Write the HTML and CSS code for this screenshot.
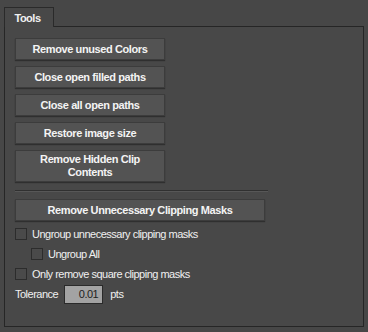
FILE: index.html
```html
<!DOCTYPE html>
<html>
<head>
<meta charset="utf-8">
<link rel="stylesheet" href="styles.css">
</head>
<body>
<div class="tabs"><div class="tab">Tools</div></div>
<div class="panel">
  <button class="btn">Remove unused Colors</button>
  <button class="btn">Close open filled paths</button>
  <button class="btn">Close all open paths</button>
  <button class="btn">Restore image size</button>
  <button class="btn tall">Remove Hidden Clip<br>Contents</button>
  <div class="sep"></div>
  <button class="btn wide">Remove Unnecessary Clipping Masks</button>
  <label class="check"><span class="box"></span>Ungroup unnecessary clipping masks</label>
  <label class="check sub"><span class="box"></span>Ungroup All</label>
  <label class="check"><span class="box"></span>Only remove square clipping masks</label>
  <div class="tol"><span>Tolerance</span><span class="input">0.01</span><span>pts</span></div>
</div>
</body>
</html>
```
FILE: styles.css
```css
html, body { margin: 0; padding: 0; }
body {
  background: #474747;
  width: 368px;
  height: 332px;
  font-family: "Liberation Sans", Arial, sans-serif;
  font-size: 11px;
  letter-spacing: -0.5px;
  color: #f0f0f0;
  overflow: hidden;
}
.tabs {
  padding: 7px 0 0 4px;
  height: 19px;
  display: flex;
  position: relative;
  z-index: 1;
}
.tab {
  width: 50px;
  box-sizing: border-box;
  border: 1px solid #2a2a2a;
  border-bottom: none;
  background: #484848;
  font-weight: bold;
  text-align: center;
  line-height: 21px;
  padding-right: 3px;
  height: 20px;
}
.panel {
  margin-left: 4px;
  width: 360px;
  height: 301px;
  box-sizing: border-box;
  border: 1px solid #262626;
  background: #484848;
  padding: 11px 0 0 10px;
  display: flex;
  flex-direction: column;
  align-items: flex-start;
}
.btn {
  width: 150px;
  height: 22px;
  margin: 0 0 6px 0;
  padding: 0;
  background: #535353;
  border: 1px solid #3c3c3c;
  box-shadow: 0 1px 1px #2f2f2f;
  color: #f4f4f4;
  font-family: "Liberation Sans", Arial, sans-serif;
  font-size: 11px;
  letter-spacing: -0.4px;
  font-weight: bold;
  line-height: 13px;
}
.btn.tall { height: 32px; line-height: 13px; padding-bottom: 1px; }
.btn.wide { width: 250px; margin-bottom: 7px; }
.sep {
  width: 253px;
  height: 0;
  border-top: 1px solid #303030;
  border-bottom: 1px solid #575757;
  margin: 2px 0 7px 0;
}
.check {
  display: flex;
  align-items: center;
  height: 12px;
  margin-bottom: 8px;
  gap: 5px;
}
.check.sub { margin-left: 16px; }
.box {
  width: 12px;
  height: 12px;
  box-sizing: border-box;
  border: 1px solid #2c2c2c;
  background: #4a4a4a;
}
.tol {
  display: flex;
  align-items: center;
  height: 18px;
  margin-top: -3px;
}
.tol .input {
  width: 39px;
  height: 19px;
  box-sizing: border-box;
  border: 1px solid #2a2a2a;
  background: #a3a3a3;
  color: #1e1e1e;
  text-align: right;
  padding-right: 4px;
  line-height: 17px;
  margin: 0 7px 0 6px;
}
```
